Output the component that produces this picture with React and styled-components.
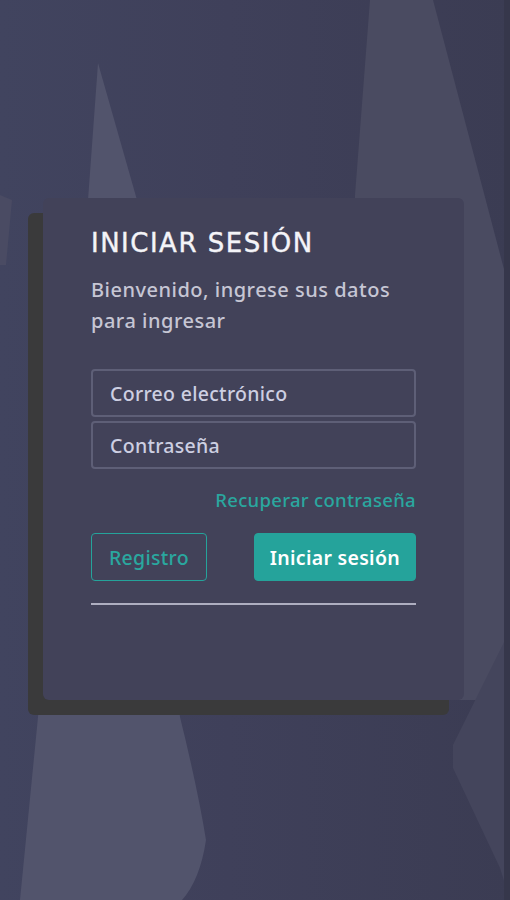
import React from 'react'
import styled, { createGlobalStyle } from 'styled-components'

const GlobalStyle = createGlobalStyle`
    body {
        margin: 0;
        font-family: "Noto Sans", "Liberation Sans", sans-serif;
    }
`;

const Page = styled.div`
    position: relative;
    width: 510px;
    height: 900px;
    overflow: hidden;
    box-sizing: border-box;
    padding: 198px 46px 0 43px;
    background: linear-gradient(90deg, #41445f 0%, #3f405a 45%, #3b3c53 100%);
`;

const Backdrop = styled.svg`
    position: absolute;
    inset: 0;
    z-index: 0;
`;

const Card = styled.div`
    position: relative;
    z-index: 1;
    width: 421px;
    height: 502px;
    box-sizing: border-box;
    padding: 30px 48px 0;
    background: #424259;
    border-radius: 6px;
    box-shadow: -15px 15px 0 #3a3a3b;
    display: flex;
    flex-direction: column;
`;

const Title = styled.h1`
    margin: 0;
    font-family: "DejaVu Sans", sans-serif;
    font-size: 26px;
    font-weight: 400;
    letter-spacing: 1.5px;
    -webkit-text-stroke: 0.4px #f4f4f8;
    color: #f4f4f8;
`;

const Subtitle = styled.p`
    margin: 16px 0 0;
    font-size: 20px;
    font-weight: 500;
    letter-spacing: 0.5px;
    line-height: 31px;
    color: #c6c6d4;
`;

const Fields = styled.div`
    display: flex;
    flex-direction: column;
    gap: 4px;
    margin-top: 33px;
`;

const Field = styled.input`
    height: 48px;
    box-sizing: border-box;
    padding: 0 17px;
    border: 2px solid #5e5f77;
    border-radius: 4px;
    background: transparent;
    font-family: inherit;
    font-size: 19.5px;
    font-weight: 500;
    letter-spacing: 0.3px;
    color: #d0d2e4;
    outline: none;
    &::placeholder {
        color: #cdcfe2;
    }
`;

const Recover = styled.a`
    align-self: flex-end;
    margin-top: 18px;
    font-size: 18.5px;
    font-weight: 500;
    letter-spacing: 0.3px;
    color: #2aa79f;
    text-decoration: none;
    cursor: pointer;
`;

const Actions = styled.div`
    display: flex;
    justify-content: space-between;
    margin-top: 21px;
`;

const Button = styled.button`
    height: 48px;
    box-sizing: border-box;
    padding: 0 ${({ $primary }) => ($primary ? '15px' : '17px')};
    border-radius: 4px;
    border: 1.5px solid #25a39b;
    background: ${({ $primary }) => ($primary ? '#25a39b' : 'transparent')};
    color: ${({ $primary }) => ($primary ? '#ffffff' : '#2aa79f')};
    font-family: inherit;
    font-size: 19.5px;
    font-weight: ${({ $primary }) => ($primary ? 600 : 500)};
    letter-spacing: 0.3px;
    cursor: pointer;
`;

const Hr = styled.hr`
    margin: 22px 0 0;
    border: none;
    height: 2px;
    background: #aeaec0;
`;

const App = () => {
    return (
        <>
            <GlobalStyle />
            <Page>
                <Backdrop width="510" height="900" viewBox="0 0 510 900">
                    <path d="M98 63 L137 200 L180 717 Q198 790 206 840 Q200 880 182 900 L20 900 L38 717 L88 200 Z" fill="#52546c" />
                    <path d="M370 0 L433 0 L510 292 L510 700 L350 700 L355 195 Z" fill="#4a4b61" />
                    <path d="M510 630 L453 745 L453 768 L500 868 L510 900 Z" fill="#44455c" />
                    <path d="M0 195 L12 200 L6 265 L0 265 Z" fill="#4a4b63" />
                    <rect x="504" y="0" width="6" height="900" fill="#36374b" />
                </Backdrop>
                <Card>
                    <Title>INICIAR SESIÓN</Title>
                    <Subtitle>Bienvenido, ingrese sus datos para ingresar</Subtitle>
                    <Fields>
                        <Field type="email" placeholder="Correo electrónico" />
                        <Field type="password" placeholder="Contraseña" />
                    </Fields>
                    <Recover>Recuperar contraseña</Recover>
                    <Actions>
                        <Button>Registro</Button>
                        <Button $primary>Iniciar sesión</Button>
                    </Actions>
                    <Hr />
                </Card>
            </Page>
        </>
    )
}

export default App
